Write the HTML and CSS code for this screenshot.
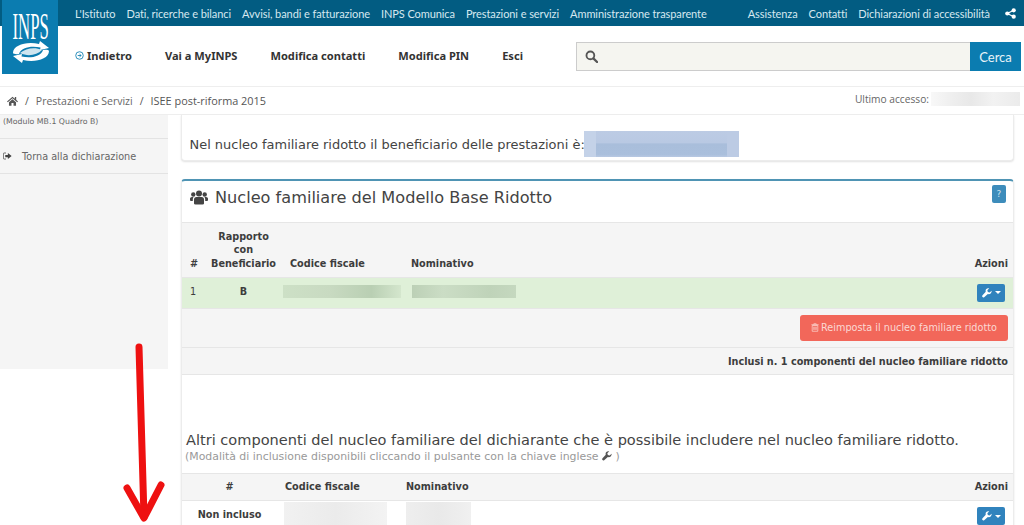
FILE: index.html
```html
<!DOCTYPE html>
<html lang="it">
<head>
<meta charset="utf-8">
<title>INPS - ISEE post-riforma 2015</title>
<link rel="stylesheet" href="styles.css">
</head>
<body>
<div class="page">
  <a class="logo" href="#" aria-label="INPS">
    <svg viewBox="0 0 56 74" width="56" height="74">
      <text class="logo-text" transform="matrix(.43 0 0 1 10.500 39)">INPS</text>
      <path d="M11 53C11 45 25 41 37 44L38 41 47 48 38 50 38.500 47.500C30 45.500 19 47 17 54 14 54.500 11 54 11 53z" fill="#fff"/>
      <path d="M47 51C47 59 33 63 21 60L20 63 11 56 20 54 19.500 56.500C28 58.500 39 57 41 50 44 49.500 47 50 47 51z" fill="#fff"/>
      <path d="M18 53C24 48 33 47 40 50 35 55 26 57 18 53z" fill="#fff" opacity=".8"/>
    </svg>
  </a>
  <nav class="topbar">
    <div class="toplinks">
      <a>L'Istituto</a><a>Dati, ricerche e bilanci</a><a>Avvisi, bandi e fatturazione</a><a>INPS Comunica</a><a>Prestazioni e servizi</a><a>Amministrazione trasparente</a>
    </div>
    <div class="toplinks">
      <a>Assistenza</a><a>Contatti</a><a>Dichiarazioni di accessibilità</a>
      <svg class="share" viewBox="0 0 12 12" width="11" height="11"><circle cx="9.500" cy="2.500" r="2.300"/><circle cx="2.500" cy="6" r="2.300"/><circle cx="9.500" cy="9.500" r="2.300"/><path d="M2.500 6 9.500 2.500M2.500 6l7 3.500" stroke="#fff" stroke-width="1.300"/></svg>
    </div>
  </nav>
  <header class="header">
    <div class="mainnav">
      <a class="back"><svg viewBox="0 0 10 10" width="9" height="9"><circle cx="5" cy="5" r="4.200" fill="none" stroke="#1a84b4" stroke-width="1"/><path d="M3 5h4M5 3.400 6.800 5 5 6.600" fill="none" stroke="#1a84b4" stroke-width="1"/></svg>Indietro</a>
      <a>Vai a MyINPS</a><a>Modifica contatti</a><a>Modifica PIN</a><a>Esci</a>
    </div>
    <form class="search">
      <div class="search-field">
        <svg viewBox="0 0 14 14" width="13" height="13"><circle cx="5.800" cy="5.800" r="4.200" fill="none" stroke="#555" stroke-width="2"/><path d="m9 9 4 4" stroke="#555" stroke-width="2.400" stroke-linecap="round"/></svg>
      </div>
      <div class="search-btn">Cerca</div>
    </form>
  </header>
  <div class="crumbs">
    <div class="crumb-path">
      <svg viewBox="0 0 14 12" width="11" height="10"><path d="M7 .5 0 6.500l1 1L7 2.400l6 5.100 1-1-2.300-2V1H10v2z" fill="#555"/><path d="M2.500 7.500 7 3.700l4.500 3.800V12H8.300V8.500H5.700V12H2.500z" fill="#555"/></svg>
      <span class="sep">/</span><a>Prestazioni e Servizi</a><span class="sep">/</span><span class="cur">ISEE post-riforma 2015</span>
    </div>
    <div class="last-access">Ultimo accesso:<span class="blur blur-access"></span></div>
  </div>
  <div class="main">
    <aside class="sidebar">
      <div class="side-item side-sub">(Modulo MB.1 Quadro B)</div>
      <div class="side-item side-link">
        <svg viewBox="0 0 12 10" width="9" height="8"><path d="M4 1H1.500Q.5 1 .5 2v6q0 1 1 1H4" fill="none" stroke="#444" stroke-width="1"/><path d="M3 3.500h3.500V1L11.500 5l-5 4V6.500H3z" fill="#444"/></svg>
        Torna alla dichiarazione
      </div>
    </aside>
    <section class="content">
      <div class="panel panel-note">
        <span>Nel nucleo familiare ridotto il beneficiario delle prestazioni è:</span><span class="blur blur-name"></span>
      </div>
      <div class="panel panel-main">
        <div class="panel-head">
          <h2>
            <svg viewBox="0 0 18 15" width="18" height="15"><g fill="#444"><circle cx="9" cy="3.500" r="3"/><circle cx="3.300" cy="4.500" r="2.200"/><circle cx="14.700" cy="4.500" r="2.200"/><path d="M4 13.500V9.500q0-2.500 2.500-2.500h5Q14 7 14 9.500v4q0 1-1.500 1h-7Q4 14.500 4 13.500z"/><path d="M0 10V8.500Q0 7 2 7h1.500Q2.800 8 2.800 9.500V11H1q-1 0-1-1zM18 10V8.500Q18 7 16 7h-1.500q.7 1 .7 2.500V11H17q1 0 1-1z"/></g></svg>
            Nucleo familiare del Modello Base Ridotto
          </h2>
          <span class="help">?</span>
        </div>
        <table class="grid grid-a">
          <thead>
            <tr>
              <th class="c-num">#</th>
              <th class="c-rel">Rapporto con Beneficiario</th>
              <th class="c-cf">Codice fiscale</th>
              <th>Nominativo</th>
              <th class="c-act">Azioni</th>
            </tr>
          </thead>
          <tbody>
            <tr class="row-ok">
              <td class="c-num">1</td>
              <td class="c-rel"><b>B</b></td>
              <td class="c-cf"><span class="blur blur-cf"></span></td>
              <td><span class="blur blur-nom"></span></td>
              <td class="c-act"><span class="tool"><svg viewBox="0 0 12 12" width="10" height="10"><path d="M11.500 3.200 9.200 5.500 7 4.800 6.400 2.600 8.700.4Q6.500-.2 5.200 1.200 3.900 2.500 4.500 4.500L.6 8.800q-.8 1 0 2 1 1 2 .2L7 7.200q2 .6 3.400-.7 1.500-1.400 1.100-3.300z" fill="#fff"/></svg><i class="caret"></i></span></td>
            </tr>
          </tbody>
        </table>
        <div class="reset-row">
          <span class="btn-reset"><svg viewBox="0 0 10 11" width="8" height="9"><path d="M.5 2h9M3.500 2V.8h3V2M1.500 3h7v7.200h-7zM3.500 4.500v4M5 4.500v4M6.500 4.500v4" fill="none" stroke="#fbd9d4" stroke-width=".9"/></svg>Reimposta il nucleo familiare ridotto</span>
        </div>
        <div class="count-row">Inclusi n. 1 componenti del nucleo familiare ridotto</div>
        <div class="others">
          <h3>Altri componenti del nucleo familiare del dichiarante che è possibile includere nel nucleo familiare ridotto.</h3>
          <p>(Modalità di inclusione disponibili cliccando il pulsante con la chiave inglese <svg viewBox="0 0 12 12" width="10" height="10"><path d="M11.500 3.200 9.200 5.500 7 4.800 6.400 2.600 8.700.4Q6.500-.2 5.200 1.200 3.900 2.500 4.500 4.500L.6 8.800q-.8 1 0 2 1 1 2 .2L7 7.200q2 .6 3.400-.7 1.500-1.400 1.100-3.300z" fill="#555"/></svg> )</p>
        </div>
        <table class="grid grid-b">
          <thead>
            <tr>
              <th class="c-state">#</th>
              <th class="c-cf">Codice fiscale</th>
              <th>Nominativo</th>
              <th class="c-act">Azioni</th>
            </tr>
          </thead>
          <tbody>
            <tr>
              <td class="c-state"><b>Non incluso</b></td>
              <td class="c-cf"><span class="blur blur-cf2"></span></td>
              <td><span class="blur blur-nom2"></span></td>
              <td class="c-act"><span class="tool"><svg viewBox="0 0 12 12" width="10" height="10"><path d="M11.500 3.200 9.200 5.500 7 4.800 6.400 2.600 8.700.4Q6.500-.2 5.200 1.200 3.900 2.500 4.500 4.500L.6 8.800q-.8 1 0 2 1 1 2 .2L7 7.200q2 .6 3.400-.7 1.500-1.400 1.100-3.300z" fill="#fff"/></svg><i class="caret"></i></span></td>
            </tr>
          </tbody>
        </table>
      </div>
    </section>
  </div>
  <svg class="arrow" viewBox="0 0 44 182" width="44" height="182">
    <path d="M17 6 22 176" stroke="#ee1111" stroke-width="7" stroke-linecap="round" fill="none"/>
    <path d="M5 147 22 177 39 144" stroke="#ee1111" stroke-width="7" stroke-linecap="round" stroke-linejoin="round" fill="none"/>
  </svg>
</div>
</body>
</html>
```
FILE: styles.css
```css
* { box-sizing: border-box; }
html, body { margin: 0; padding: 0; background: #fff; }
.page {
  position: relative;
  width: 1024px;
  height: 525px;
  overflow: hidden;
  font-family: "DejaVu Sans", sans-serif;
  color: #444;
}
.logo {
  position: absolute;
  left: 2px;
  top: 0;
  width: 56px;
  height: 74px;
  background: #0b7cb0;
}
.logo svg { display: block; }
.logo-text {
  font-family: "Liberation Serif", serif;
  font-size: 39px;
  fill: #fff;
}
.topbar {
  height: 26px;
  background: #025c82;
  display: flex;
  justify-content: space-between;
  align-items: center;
  padding: 0 8px 0 75px;
}
.toplinks {
  display: flex;
  align-items: center;
  gap: 11px;
  font-family: "Lato", sans-serif;
  font-size: 11px;
  letter-spacing: -0.08px;
  color: #d6e8f0;
  white-space: nowrap;
}
.share { fill: #fff; margin-left: 4px; }
.header {
  height: 60px;
  display: flex;
  align-items: center;
  justify-content: space-between;
  padding: 0 3px 0 75px;
}
.mainnav {
  display: flex;
  align-items: center;
  gap: 33px;
  margin-top: -2px;
  font-family: "Noto Sans", sans-serif;
  font-weight: 700;
  font-size: 11.100px;
  color: #333;
}
.back { display: flex; align-items: center; gap: 3px; }
.search { display: flex; height: 29px; width: 445px; margin-top: 1px; }
.search-field {
  flex: 1;
  background: #f5f5f0;
  border: 1px solid #ccc;
  border-right: 0;
  display: flex;
  align-items: center;
  padding-left: 8px;
}
.search-btn {
  width: 51px;
  background: #0b7cb0;
  color: #e8f3f8;
  font-family: "Lato", sans-serif;
  font-size: 13px;
  display: flex;
  align-items: center;
  justify-content: center;
}
.crumbs {
  height: 29px;
  border-top: 1px solid #eee;
  border-bottom: 1px solid #eee;
  display: flex;
  justify-content: space-between;
  align-items: center;
  padding: 0 4px 0 7px;
  font-family: "Open Sans", sans-serif;
  font-size: 10.500px;
  color: #666;
}
.crumb-path { display: flex; align-items: center; }
.sep { margin: 0 7px; color: #555; }
.cur { color: #555; font-size: 10.900px; }
.last-access { display: flex; align-items: center; gap: 2px; margin-top: -3px; font-size: 10.200px; }
.blur { display: inline-block; vertical-align: middle; }
.blur-access {
  width: 89px;
  height: 14px;
  background: linear-gradient(90deg, #f8f8f8, #eeeeee 25%, #e8e8e8 45%, #f2f2f2 70%, #ebebeb);
}
.main { display: flex; align-items: flex-start; }
.sidebar {
  width: 168px;
  height: 254px;
  flex: none;
  background: #f5f5f5;
  font-size: 9.700px;
  color: #666;
}
.side-item { border-bottom: 1px solid #e3e3e3; }
.side-sub {
  height: 24px;
  padding: 2px 0 0 3px;
  font-size: 7.800px;
}
.side-link {
  height: 35px;
  display: flex;
  align-items: center;
  gap: 10px;
  padding-left: 3px;
}
.content {
  flex: 1;
  min-width: 0;
  padding: 0 10px 0 13px;
}
.panel {
  background: #fff;
  border: 1px solid #ececec;
  border-radius: 0 0 4px 4px;
  box-shadow: 0 1px 2px rgba(0, 0, 0, .12);
}
.panel-note {
  height: 46px;
  border-top: 0;
  padding: 14px 0 0 7.500px;
  font-size: 12.960px;
  display: flex;
  align-items: center;
  color: #444;
}
.blur-name {
  width: 155px;
  height: 26px;
  margin-top: -2px;
  margin-left: -1px;
  background:
    linear-gradient(90deg, #c4d2e8 0, #c4d2e8 8%, transparent 8%, transparent 92%, #bccbe4 92%),
    linear-gradient(180deg, #bccbe4, #b9c9e3 45%, #a9bedb 50%, #aabfdc 90%, #b8c8e2);
}
.panel-main {
  margin-top: 18px;
  border-top: 2px solid #4f94b4;
  border-radius: 4px 4px 0 0;
}
.panel-head {
  height: 41px;
  display: flex;
  justify-content: space-between;
  padding: 4px 7px 0 8px;
}
.panel-head h2 {
  margin: 0;
  font-size: 16.150px;
  font-weight: 400;
  display: flex;
  align-items: center;
  gap: 7px;
  height: 24px;
  color: #444;
}
.help {
  width: 14px;
  height: 18px;
  background: #3d8cbb;
  color: #cfe4f0;
  font-size: 9px;
  border-radius: 2px;
  display: flex;
  align-items: center;
  justify-content: center;
}
.grid {
  width: 100%;
  border-collapse: collapse;
  table-layout: fixed;
  font-size: 9.700px;
  background: #f5f5f5;
}
.grid th {
  font-weight: 700;
  text-align: left;
  vertical-align: bottom;
  padding: 0 8px 7px;
  line-height: 13.500px;
  color: #3d3d3d;
  border-top: 1px solid #e6e6e6;
  border-bottom: 1px solid #e6e6e6;
}
.grid td { padding: 0 8px 3px; vertical-align: middle; color: #3d3d3d; }
.grid td b { font-weight: 700; }
.grid th.c-act { text-align: right; padding-right: 5px; }
.grid td.c-act { text-align: right; padding: 0 8px 0 0; }
.grid-a thead tr { height: 55px; }
.grid-a th:nth-child(1) { width: 23px; }
.grid-a th:nth-child(2) { width: 77px; padding: 0 4px 7px; text-align: center; }
.grid-a th:nth-child(3) { width: 121px; }
.grid-a th:last-child { width: 70px; }
.grid-a .c-rel { text-align: center; }
.row-ok { height: 30px; background: #dff0d8; }
.blur-cf {
  width: 118px;
  height: 13px;
  margin-left: -7px;
  background: linear-gradient(90deg, #cde0c6, #c8dac1 40%, #b9cfb3 75%, #d4e6cd);
}
.blur-nom {
  width: 104px;
  height: 13px;
  margin-left: 1px;
  background: linear-gradient(90deg, #bcd0b6, #cbddc5 30%, #bfd3b9 75%, #c5d8bf);
}
.tool {
  display: inline-flex;
  align-items: center;
  justify-content: center;
  gap: 3px;
  width: 28px;
  height: 18px;
  background: #3083bd;
  border-radius: 2px;
  vertical-align: middle;
}
.caret {
  width: 0;
  height: 0;
  border-left: 3px solid transparent;
  border-right: 3px solid transparent;
  border-top: 3px solid #fff;
}
.reset-row {
  height: 39px;
  background: #f5f5f5;
  display: flex;
  justify-content: flex-end;
  align-items: center;
  padding: 0 5px 0 0;
  border-top: 1px solid #e6e6e6;
}
.btn-reset {
  height: 26px;
  width: 208px;
  background: #f2675a;
  border-radius: 3px;
  color: #fbd9d4;
  font-size: 9.700px;
  display: flex;
  align-items: center;
  justify-content: center;
  gap: 2px;
}
.count-row {
  height: 28px;
  background: #f5f5f5;
  border-top: 1px solid #e6e6e6;
  border-bottom: 1px solid #e6e6e6;
  text-align: right;
  padding: 8px 5px 0 0;
  font-size: 9.700px;
  font-weight: 700;
  color: #3d3d3d;
}
.others { height: 98px; padding: 56px 0 0 4px; }
.others h3 {
  margin: 0;
  font-size: 14.550px;
  font-weight: 400;
  line-height: 18px;
  color: #444;
  white-space: nowrap;
}
.others p {
  margin: 1px 0 0 -1px;
  font-size: 10.900px;
  line-height: 14px;
  color: #999;
  white-space: nowrap;
}
.others p svg { vertical-align: -1px; }
.grid-b { background: #fff; }
.grid-b thead tr { height: 27px; }
.grid-b thead { background: #f5f5f5; }
.grid-b th { vertical-align: middle; padding: 0 8px; }
.grid-b th:nth-child(1) { width: 95px; text-align: center; }
.grid-b th:nth-child(2) { width: 121px; }
.grid-b th:last-child { width: 70px; }
.grid-b .c-state { text-align: center; }
.grid-b td.c-state { padding-bottom: 1px; }
.grid-b td.c-act { padding-top: 2px; }
.grid-b tbody tr { height: 30px; }
.blur-cf2 {
  width: 103px;
  height: 23px;
  margin-left: -1px;
  background: linear-gradient(90deg, #f1f1f1, #ebebeb 50%, #f3f3f3);
}
.blur-nom2 {
  width: 65px;
  height: 23px;
  background: linear-gradient(90deg, #eeeeee, #e9e9e9 50%, #f0f0f0);
}
.arrow {
  position: absolute;
  left: 122px;
  top: 341px;
}
```
